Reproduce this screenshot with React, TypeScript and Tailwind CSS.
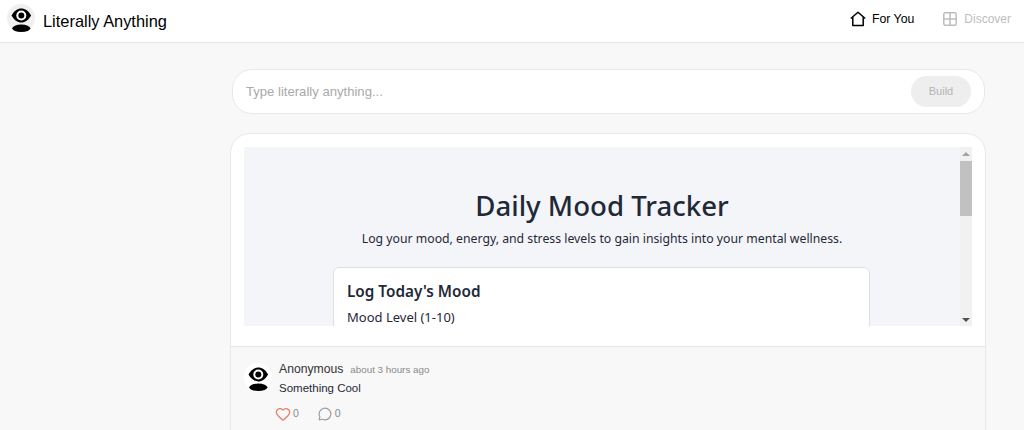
import { Heart, MessageCircle } from 'lucide-react';

function EyeLogo({ className }: { className: string }) {
  return (
    <svg viewBox="0 0 28 28" className={className}>
      <path d="M4.500 11.500C7 7 10.500 4.500 14.300 4.500S21.600 7 24.100 11.500C21.600 16 18 18.500 14.300 18.500S7 16 4.500 11.500z" fill="#000" />
      <circle cx="14.300" cy="11.500" r="5" fill="#fff" />
      <circle cx="14.300" cy="11.500" r="3" fill="#000" />
      <ellipse cx="14.300" cy="24.300" rx="9" ry="3.700" fill="#000" />
    </svg>
  );
}

function HomeIcon() {
  return (
    <svg viewBox="0 0 16 16" className="h-4 w-4" fill="none" stroke="#000" strokeWidth="1.500" strokeLinejoin="round">
      <path d="M.8 7.500 8 1.300l7.200 6.200M2.800 6v8.500h10.400V6" />
    </svg>
  );
}

function GridIcon() {
  return (
    <svg viewBox="0 0 14 14" className="h-[14px] w-[14px]" fill="none" stroke="#bdbdbd" strokeWidth="1.500">
      <rect x=".8" y=".8" width="12.400" height="12.400" rx="1.500" />
      <path d="M7 1v12M1 7h12" />
    </svg>
  );
}

function Scrollbar() {
  return (
    <div className="flex w-3 shrink-0 flex-col items-center bg-[#f1f1f1]">
      <div className="flex h-[14px] w-full items-center justify-center">
        <div className="h-0 w-0 border-x-[4px] border-b-[4px] border-x-transparent border-b-[#a3a3a3]" />
      </div>
      <div className="h-[55px] w-full bg-[#c1c1c1]" />
      <div className="flex-1" />
      <div className="flex h-[13px] w-full items-center justify-center">
        <div className="h-0 w-0 border-x-[4px] border-t-[4px] border-x-transparent border-t-[#505050]" />
      </div>
    </div>
  );
}

export default function App() {
  return (
    <div className="h-[430px] overflow-hidden bg-[#f8f8f8] font-['Liberation_Sans',sans-serif]">
      <header className="flex h-[43px] items-center justify-between border-b border-[#e5e5e5] bg-white pl-[7px] pr-[13px]">
        <div className="flex items-center gap-[8px]">
          <div className="-mt-[5px] flex h-[28px] w-[28px] items-center justify-center rounded-full bg-[#f0f0f0]">
            <EyeLogo className="h-[28px] w-[28px]" />
          </div>
          <span className="text-[16.400px] text-black">Literally Anything</span>
        </div>
        <nav className="-mt-[4px] flex items-center gap-[29px]">
          <div className="flex items-center gap-[6px] text-[12.300px] text-black">
            <HomeIcon />
            <span>For You</span>
          </div>
          <div className="flex items-center gap-[7px] text-xs text-[#bdbdbd]">
            <GridIcon />
            <span>Discover</span>
          </div>
        </nav>
      </header>

      <main className="flex flex-col items-end pr-[38px] pt-[26px]">
        <div className="mr-px flex h-[45px] w-[753px] items-center justify-between rounded-[20px] border border-[#e8e8e8] bg-white px-[13px]">
          <span className="text-[13.100px] text-[#a9a9a9]">Type literally anything...</span>
          <div className="flex h-[31px] w-[60px] items-center justify-center rounded-full bg-[#eeeeee] text-[11px] text-[#b5b5b5]">
            Build
          </div>
        </div>

        <section className="mt-[19px] w-[756px] overflow-hidden rounded-t-[20px] border border-[#e8e8e8] bg-white">
          <div className="px-[13px] pb-5 pt-[13px]">
            <div className="flex h-[179px] overflow-hidden bg-[#f4f5f9] font-['Noto_Sans',sans-serif] text-[#1f2937]">
              <div className="flex flex-1 flex-col items-center pt-[24px]">
                <h1 className="text-[27.600px] font-medium leading-[68px]">Daily Mood Tracker</h1>
                <p className="-mt-[10px] text-[12.250px] leading-5">
                  Log your mood, energy, and stress levels to gain insights into your mental wellness.
                </p>
                <div className="mt-[18px] -ml-px h-[100px] w-[537px] rounded-t-md border border-[#e0e0e4] bg-white px-[13px] pt-[11px]">
                  <h2 className="text-[15.300px] font-semibold leading-6">Log Today's Mood</h2>
                  <p className="mt-[4px] text-[13px] leading-5">Mood Level (1-10)</p>
                </div>
              </div>
              <Scrollbar />
            </div>
          </div>
          <div className="flex h-[84px] gap-[7px] border-t border-[#e5e5e5] bg-[#f8f8f8] pl-[13px] pt-[16px]">
            <div className="flex h-[28px] w-[28px] items-center justify-center rounded-full bg-white">
              <EyeLogo className="h-[28px] w-[28px]" />
            </div>
            <div className="-mt-[3px] flex flex-col">
              <div className="flex items-baseline gap-[7px]">
                <span className="text-[12.200px] text-[#333333]">Anonymous</span>
                <span className="text-[9.800px] text-[#8a8a8a]">about 3 hours ago</span>
              </div>
              <p className="mt-[2px] text-[11.500px] text-[#1f2937]">Something Cool</p>
              <div className="-ml-[4px] mt-[8px] flex items-center gap-[19px] text-[10.500px] text-[#8a8a8a]">
                <div className="flex items-center gap-[2px]">
                  <Heart className="h-4 w-4 text-[#e5806a]" strokeWidth={2} />
                  <span>0</span>
                </div>
                <div className="flex items-center gap-[3px]">
                  <MessageCircle className="h-[14px] w-[14px] text-[#9a9a9a]" strokeWidth={2} />
                  <span>0</span>
                </div>
              </div>
            </div>
          </div>
        </section>
      </main>
    </div>
  );
}
